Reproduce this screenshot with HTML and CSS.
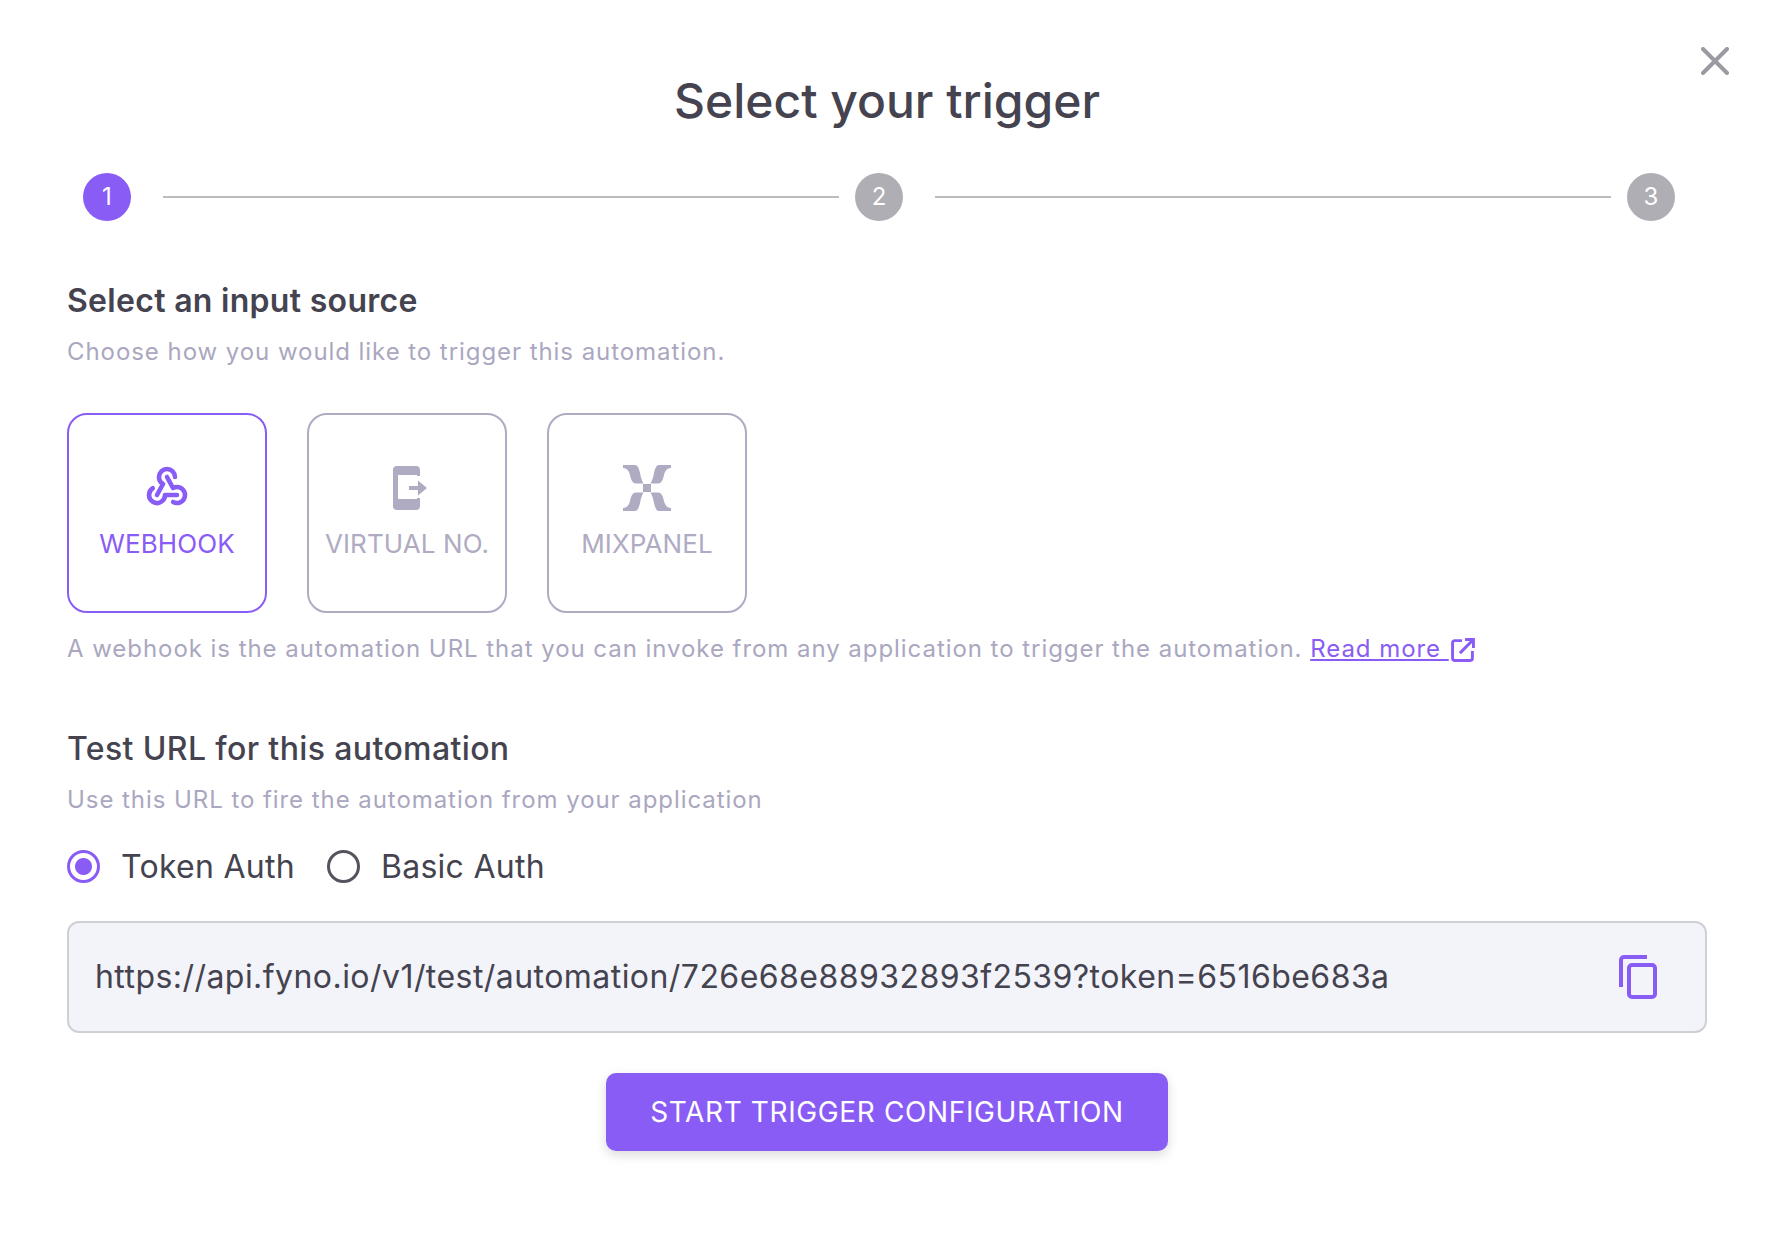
FILE: index.html
```html
<!DOCTYPE html>
<html lang="en">
<head>
  <meta charset="UTF-8" />
  <title>Select your trigger</title>
  <link rel="stylesheet" href="styles.css">
</head>
<body>
  <div class="modal">
    <button class="close-btn" aria-label="Close">
      <svg width="28" height="28" viewBox="0 0 28 28"><path d="M2 2L26 26M26 2L2 26" /></svg>
    </button>

    <h1 class="title">Select your trigger</h1>

    <div class="stepper">
      <div class="step step-active">1</div>
      <div class="step-line"></div>
      <div class="step">2</div>
      <div class="step-line"></div>
      <div class="step">3</div>
    </div>

    <h2 class="section-title">Select an input source</h2>
    <p class="section-sub">Choose how you would like to trigger this automation.</p>

    <div class="sources">
      <div class="source source-active">
        <svg class="source-icon" width="52" height="52" viewBox="-1 0 26 26" fill="none" stroke="currentColor" stroke-width="2.3" stroke-linecap="round" stroke-linejoin="round">
          <path d="M4.876 13.61a4 4 0 1 0 6.124 3.39h6" />
          <path d="M15.066 20.502a4 4 0 1 0 1.934 -7.502c-.706 0 -1.424 .179 -2 .5l-3 -5.5" />
          <path d="M16 8a4 4 0 1 0 -8 0c0 1.506 .77 2.818 2 3.5l-3 5.5" />
        </svg>
        <span>WEBHOOK</span>
      </div>
      <div class="source">
        <svg class="source-icon" width="52" height="52" viewBox="0 0 52 52" fill="currentColor">
          <path d="M16 5H35a4 4 0 0 1 4 4V15H36V14H17V38H36V37H39V45a4 4 0 0 1-4 4H16a4 4 0 0 1-4-4V9a4 4 0 0 1 4-4Z" />
          <path d="M28 25H37V19.5L46 27 37 34.5V29H28Z" />
        </svg>
        <span>VIRTUAL NO.</span>
      </div>
      <div class="source">
        <svg class="source-icon" width="52" height="52" viewBox="0 0 52 52" fill="currentColor">
          <rect x="22" y="23" width="8" height="8" />
          <path d="M2 4H14C17 4 18 8 19 12C20 17 21 20 22.5 22.5H15C11 22.5 10 18 9 14C8 10 6 7 2 7Z" />
          <path d="M2 4H14C17 4 18 8 19 12C20 17 21 20 22.5 22.5H15C11 22.5 10 18 9 14C8 10 6 7 2 7Z" transform="matrix(-1 0 0 1 52 0)" />
          <path d="M2 4H14C17 4 18 8 19 12C20 17 21 20 22.5 22.5H15C11 22.5 10 18 9 14C8 10 6 7 2 7Z" transform="matrix(1 0 0 -1 0 54)" />
          <path d="M2 4H14C17 4 18 8 19 12C20 17 21 20 22.5 22.5H15C11 22.5 10 18 9 14C8 10 6 7 2 7Z" transform="matrix(-1 0 0 -1 52 54)" />
        </svg>
        <span>MIXPANEL</span>
      </div>
    </div>

    <p class="source-desc">
      A webhook is the automation URL that you can invoke from any application to trigger the automation.
      <a class="read-more" href="#">Read more
        <svg width="24" height="24" viewBox="0.5 0.5 23 23" fill="none" stroke="currentColor" stroke-width="2.8"><path d="M11 3H4a2 2 0 0 0-2 2V20a2 2 0 0 0 2 2H19a2 2 0 0 0 2-2V13" /><path d="M9 15L22 2M14 2H22V10" /></svg>
      </a>
    </p>

    <h2 class="section-title section-title-light">Test URL for this automation</h2>
    <p class="section-sub">Use this URL to fire the automation from your application</p>

    <div class="auth-options">
      <div class="auth-option">
        <span class="radio radio-on"></span>
        <span>Token Auth</span>
      </div>
      <div class="auth-option">
        <span class="radio"></span>
        <span>Basic Auth</span>
      </div>
    </div>

    <div class="url-box">
      <span class="url-text">https://api.fyno.io/v1/test/automation/726e68e88932893f2539?token=6516be683a</span>
      <svg class="copy-icon" width="38" height="44" viewBox="0 0 38 44" fill="none" stroke="currentColor" stroke-width="4">
        <path d="M2 32V5a3 3 0 0 1 3-3H28" />
        <rect x="10" y="10" width="26" height="32" rx="3" />
      </svg>
    </div>

    <div class="actions">
      <button class="primary-btn">START TRIGGER CONFIGURATION</button>
    </div>
  </div>
</body>
</html>
```

FILE: styles.css
```css
body {
  margin: 0;
  background: #fff;
  font-family: Inter, "Noto Sans", sans-serif;
  color: #44434f;
}

.modal {
  position: relative;
  box-sizing: border-box;
  width: 1780px;
  height: 1244px;
  padding: 72px 73px 0 67px;
}

.close-btn {
  position: absolute;
  top: 47px;
  right: 51px;
  padding: 0;
  border: none;
  background: none;
  line-height: 0;
}

.close-btn path {
  stroke: #9a9aa2;
  stroke-width: 4;
  stroke-linecap: round;
  fill: none;
}

.title {
  margin: 0;
  font-size: 48px;
  line-height: 58px;
  font-weight: 500;
  text-align: center;
}

.stepper {
  display: flex;
  align-items: center;
  margin: 43px 32px 0 16px;
}

.step {
  width: 48px;
  height: 48px;
  flex: none;
  border-radius: 50%;
  background: #aeaeb4;
  color: #fff;
  font-size: 24px;
  line-height: 48px;
  text-align: center;
}

.step-active {
  background: #8a5cf6;
}

.step-line {
  flex: 1;
  height: 2px;
  margin: 0 16px 0 32px;
  background: #bbbbc0;
}

.section-title {
  margin: 60px 0 0;
  font-size: 32px;
  line-height: 40px;
  font-weight: 600;
  letter-spacing: 0.3px;
}

.section-title-light {
  margin-top: 64px;
  font-weight: 500;
  letter-spacing: 0.38px;
}

.section-sub {
  margin: 15px 0 0;
  font-size: 24px;
  line-height: 32px;
  letter-spacing: 0.94px;
  color: #aaa7c0;
}

.sources {
  display: flex;
  gap: 40px;
  margin-top: 45px;
}

.source {
  box-sizing: border-box;
  width: 200px;
  height: 200px;
  display: flex;
  flex-direction: column;
  align-items: center;
  padding-top: 46px;
  border: 2px solid #aeabc2;
  border-radius: 20px;
  font-size: 26px;
  letter-spacing: 0.1px;
  color: #aeabc2;
}

.source span {
  margin-top: 14px;
  line-height: 34px;
  white-space: nowrap;
}

.source-active {
  border-color: #8a5cf6;
  color: #8a5cf6;
}

.source-desc {
  margin: 20px 0 0;
  font-size: 24px;
  line-height: 32px;
  letter-spacing: 0.95px;
  color: #aaa7c0;
}

.read-more {
  color: #8a5cf6;
  text-decoration: underline;
}

.read-more svg {
  margin-left: 2px;
  vertical-align: -5px;
}

.auth-options {
  display: flex;
  gap: 32px;
  margin-top: 34px;
}

.auth-option {
  display: flex;
  align-items: center;
  gap: 21px;
  height: 33px;
  font-size: 32px;
  letter-spacing: 0.28px;
}

.radio {
  box-sizing: border-box;
  width: 33px;
  height: 33px;
  border: 3px solid #55545e;
  border-radius: 50%;
}

.radio-on {
  border-color: #8a5cf6;
  background: radial-gradient(circle, #8a5cf6 0 8px, #fff 9px);
}

.url-box {
  box-sizing: border-box;
  height: 112px;
  margin-top: 38px;
  padding: 0 48px 0 26px;
  display: flex;
  align-items: center;
  justify-content: space-between;
  background: #f3f4fa;
  border: 2px solid #cfd0d6;
  border-radius: 12px;
}

.url-text {
  padding-bottom: 2px;
  font-size: 32px;
  letter-spacing: 0.45px;
}

.copy-icon {
  color: #8a5cf6;
}

.actions {
  display: flex;
  justify-content: center;
  margin-top: 40px;
}

.primary-btn {
  width: 562px;
  height: 78px;
  border: none;
  border-radius: 10px;
  background: #8a5cf6;
  color: #fff;
  font-family: inherit;
  font-size: 28px;
  letter-spacing: 0.62px;
  box-shadow: 0 4px 12px rgba(0, 0, 0, 0.15);
}
```
